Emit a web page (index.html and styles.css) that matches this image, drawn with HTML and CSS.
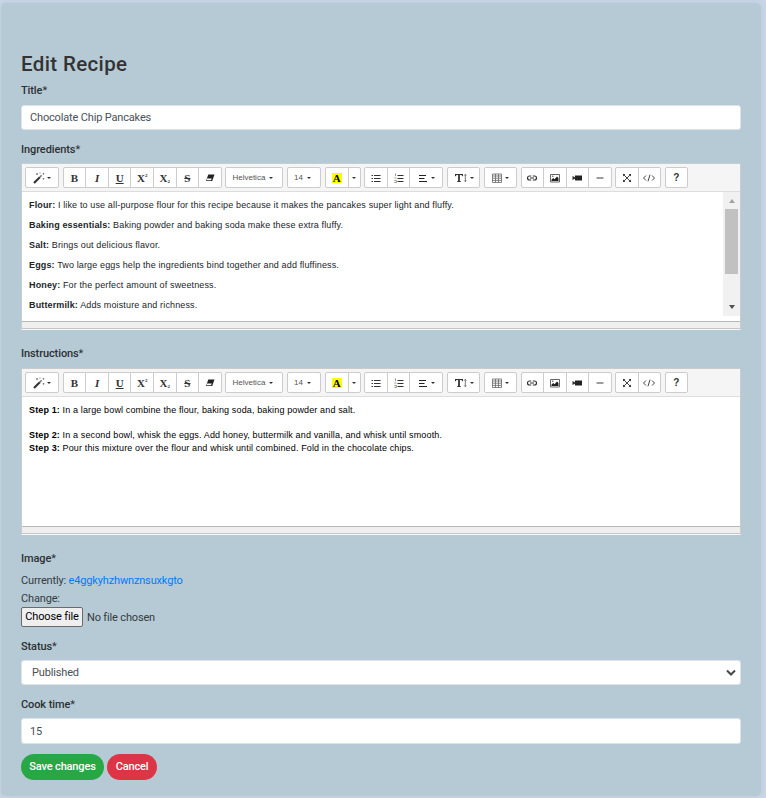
FILE: index.html
```html
<!DOCTYPE html>
<html lang="en">
<head>
<meta charset="utf-8">
<title>Edit Recipe</title>
<link rel="stylesheet" href="styles.css">
</head>
<body>
<svg class="sprite" aria-hidden="true">
  <symbol id="magic" viewBox="0 0 12 12"><path d="M1 11 6.8 5.2" stroke="#333" stroke-width="2.1"/><path d="M6.8 5.2 8.7 3.3" stroke="#777" stroke-width="1.6"/><path d="M4 1v2M3 2h2M7 .5v1.2M10.5 1v1.6M9.7 1.8h1.6M10.5 6v1.6M9.7 6.8h1.6" stroke="#666" stroke-width=".8"/></symbol>
  <symbol id="eraser" viewBox="0 0 12 12"><path d="M4.3 2.5H10.5L8.2 9H2z" fill="#222"/><path d="M3.2 6.4H7.7L7 8.2H2.6z" fill="#fff"/></symbol>
  <symbol id="ul" viewBox="0 0 12 12"><path d="M1.5 3.5h1.5M1.5 6.5h1.5M1.5 9.5h1.5M4 3.5h6.5M4 6.5h6.5M4 9.5h6.5" stroke="#333" stroke-width="1.1"/></symbol>
  <symbol id="ol" viewBox="0 0 12 12"><path d="M2.5 1.5v2.6M1.4 6h2M1.4 8.5h2v2h-2" fill="none" stroke="#8a7965" stroke-width=".8"/><path d="M4.5 3.5h6M4.5 6.5h6M4.5 9.5h6" stroke="#333" stroke-width="1.1"/></symbol>
  <symbol id="align" viewBox="0 0 12 12"><path d="M2 3.5h7M2 6.5h5.5M2 9.5h8" stroke="#222" stroke-width="1.2"/></symbol>
  <symbol id="height" viewBox="0 0 14 12"><path d="M1 4.2V2h8v2.2H8.3L7.5 3H5.9v6.1l1.1.5v.4H3v-.4l1.1-.5V3H2.5l-.8 1.2z" fill="#333"/><path d="M11.3 2.5v7M10.3 3.5l1-1.2 1 1.2M10.3 8.5l1 1.2 1-1.2" fill="none" stroke="#555" stroke-width=".8"/></symbol>
  <symbol id="table" viewBox="0 0 12 12"><path d="M1.5 2h9v8.5h-9zM1.5 4h9M1.5 6.2h9M1.5 8.4h9M4.5 2v8.5M7.5 2v8.5" fill="none" stroke="#666" stroke-width=".8"/></symbol>
  <symbol id="link" viewBox="0 0 12 12"><path d="M5.2 4H3.5a2 2 0 0 0 0 4h1.7M6.8 4h1.7a2 2 0 0 1 0 4H6.8M4 6h4" fill="none" stroke="#333" stroke-width="1.2"/></symbol>
  <symbol id="picture" viewBox="0 0 12 12"><path d="M1.5 2.5h9v7.5h-9z" fill="none" stroke="#555" stroke-width=".9"/><path d="M2.5 9V7.5L4.3 6l1.2 1.2L8 4.5 9.5 6v3z" fill="#222"/><circle cx="3.8" cy="4.3" r=".7" fill="#444"/></symbol>
  <symbol id="video" viewBox="0 0 12 12"><path d="M4 3.5h7v5H4z" fill="#222"/><path d="M1.5 4v4l3-1.6v-.8z" fill="#333"/></symbol>
  <symbol id="minus" viewBox="0 0 12 12"><path d="M2.5 6h7" stroke="#666" stroke-width="1.3"/></symbol>
  <symbol id="expand" viewBox="0 0 12 12"><path d="m3 3 6 6M9 3 3 9" stroke="#444"/><path d="M2 4.4V2h2.4zM7.6 2H10v2.4zM2 7.6V10h2.4zM10 7.6V10H7.6z" fill="#333"/></symbol>
  <symbol id="code" viewBox="0 0 14 12"><path d="M4 3.5 1.5 6 4 8.5M10 3.5l2.5 2.5L10 8.5M8 2.7 6 9.3" fill="none" stroke="#444" stroke-width="1"/></symbol>
</svg>

<form class="card">
  <h1>Edit Recipe</h1>
  <label class="label">Title<span>*</span></label>
  <div class="control title">Chocolate Chip Pancakes</div>

  <label class="label label-ing">Ingredients<span>*</span></label>
  <section class="editor">
    <div class="toolbar"></div>
    <div class="editable">
      <div class="body list">
        <p><b>Flour:</b> I like to use all-purpose flour for this recipe because it makes the pancakes super light and fluffy.</p>
        <p><b>Baking essentials:</b> Baking powder and baking soda make these extra fluffy.</p>
        <p><b>Salt:</b> Brings out delicious flavor.</p>
        <p><b>Eggs:</b> Two large eggs help the ingredients bind together and add fluffiness.</p>
        <p><b>Honey:</b> For the perfect amount of sweetness.</p>
        <p><b>Buttermilk:</b> Adds moisture and richness.</p>
      </div>
      <div class="scrollbar"><i class="up"></i><i class="thumb"></i><i class="down"></i></div>
    </div>
    <div class="statusbar"></div>
  </section>

  <label class="label label-ins">Instructions<span>*</span></label>
  <section class="editor">
    <div class="toolbar"></div>
    <div class="editable">
      <div class="body steps">
        <p class="first"><b>Step 1:</b> In a large bowl combine the flour, baking soda, baking powder and salt.</p>
        <p><b>Step 2:</b> In a second bowl, whisk the eggs. Add honey, buttermilk and vanilla, and whisk until smooth.</p>
        <p><b>Step 3:</b> Pour this mixture over the flour and whisk until combined. Fold in the chocolate chips.</p>
      </div>
    </div>
    <div class="statusbar"></div>
  </section>

  <label class="label label-img">Image<span>*</span></label>
  <div class="file-text current">Currently: <a>e4ggkyhzhwnznsuxkgto</a></div>
  <div class="file-text change">Change:</div>
  <div class="file"><span class="choose">Choose file</span><span>No file chosen</span></div>

  <label class="label label-status">Status<span>*</span></label>
  <div class="control select"><span>Published</span><svg width="10" height="8" viewBox="0 0 10 8"><path d="m1 1.5 4 4 4-4" fill="none" stroke="#43484d" stroke-width="2"/></svg></div>

  <label class="label label-cook">Cook time<span>*</span></label>
  <div class="control cook">15</div>
  <div class="actions"><span class="btn save">Save changes</span><span class="btn cancel">Cancel</span></div>
</form>
<script src="toolbar.js"></script>
</body>
</html>
```
FILE: styles.css
```css
* { box-sizing: border-box; }
html, body { margin: 0; height: 798px; overflow: hidden; }
body { background: #cbd7e6; font-family: Roboto, sans-serif; font-size: 11px; letter-spacing: -.16px; color: #343a40; padding: 3px 5px 2px 1px; }
.sprite { display: none; }
.card { height: 793px; width: 760px; border-radius: 5px; background: #b6cad5; padding: 48px 20px 0; box-shadow: 0 0 7px rgba(150, 170, 205, .35); }
h1 { margin: 0; font-size: 20.5px; line-height: 26px; font-weight: 500; color: #333; height: 32px; letter-spacing: .36px; }
.label { display: block; height: 22px; line-height: 16px; font-weight: 500; color: #2d3134; letter-spacing: -.1px; }
.label span { font-weight: 400; }
.control { height: 25px; border: 1px solid #dde3e8; border-radius: 3px; background: #fff; color: #495057; padding: 0 8px; line-height: 23px; font-size: 11px; }
.label-ing { margin-top: 12px; height: 21px; }

.editor { height: 167px; border: 1px solid #c9cccf; border-bottom: 1px solid #f6f8f9; background: #fff; display: flex; flex-direction: column; }
.toolbar { height: 28px; flex: none; background: #f5f5f5; border-bottom: 1px solid #ddd; display: flex; gap: 3.7px; padding: 3px 3px 0; letter-spacing: 0; }
.group { display: flex; flex: none; height: 21px; border: 1px solid #ccc; border-radius: 2px; background: #fff; }
.tool { display: flex; align-items: center; justify-content: center; gap: 2px; flex: 1 1 0; color: #333; font: 700 11px "Liberation Serif", serif; white-space: nowrap; }
.tool + .tool { border-left: 1px solid #ccc; }
.tool svg { display: block; width: 12px; height: 12px; flex: none; }
.tool .wide { width: 14px; }
.tool sup, .tool sub { font-size: 5px; line-height: 1; }
.tool sup { align-self: flex-start; margin: 5px 0 0 -2px; }
.tool sub { align-self: flex-end; margin: 0 0 3px -2px; }
.tool.sans { font: 400 8px "Liberation Sans", sans-serif; color: #555; gap: 4px; padding-right: 3px; }
.tool.question { font: 700 10px "Liberation Sans", sans-serif; }
.caret { border: 2px solid transparent; border-top-color: #333; border-bottom: 0; }
.arrow { flex: 0 0 12px; }
.bulky { flex: 0 0 33px; }
.mark { background: #ff0; color: #000; padding: 0 1px; line-height: 10px; }
.italic { font-style: italic; }
.underline { text-decoration: underline; }
.strike { text-decoration: line-through; }

.editable { height: 129px; flex: none; display: flex; justify-content: space-between; }
.body { font-family: "Liberation Sans", Arial, sans-serif; font-size: 9px; letter-spacing: .135px; white-space: nowrap; padding: 3px 0 0 7px; }
.body p { margin: 0; }
.list { color: #212529; }
.list p { height: 20px; line-height: 20px; }
.steps { color: #000; padding-top: 7px; }
.steps p { height: 13px; line-height: 13px; }
.steps .first { height: 25px; }
.scrollbar { width: 17px; height: 124px; background: #f1f1f1; display: flex; flex-direction: column; align-items: center; padding: 7px 0 7px; }
.up { border: 3.5px solid transparent; border-top: 0; border-bottom: 4px solid #a3a3a3; }
.down { border: 3.5px solid transparent; border-bottom: 0; border-top: 4px solid #505050; margin-top: auto; }
.thumb { width: 13px; height: 65px; margin-top: 6px; background: #c1c1c1; }
.statusbar { height: 8px; background: #efefef; border-top: 1px solid #b8b8b8; border-bottom: 1px solid #c5c5c5; }

.label-ins { margin-top: 16px; }
.label-img { margin-top: 16px; }
.file-text { height: 18px; line-height: 16px; }
.file-text a { color: #007bff; }
.file { display: flex; align-items: center; gap: 4px; height: 20px; margin-top: -2px; }
.choose { border: 1px solid #6b6b6b; border-radius: 2px; background: #efefef; color: #000; width: 62px; height: 20px; line-height: 17px; text-align: center; }
.label-status { margin-top: 12px; height: 21px; }
.select { display: flex; justify-content: space-between; align-items: center; padding: 0 4px 0 10px; }
.label-cook { margin-top: 12px; height: 21px; }
.cook { height: 26px; line-height: 25px; }
.actions { display: flex; gap: 3px; margin-top: 10px; }
.btn { height: 26px; line-height: 25px; border-radius: 13px; color: #fff; font-weight: 500; text-align: center; }
.save { width: 83px; background: #28a745; }
.cancel { width: 50px; background: #dc3545; }
```
FILE: toolbar.js
```js
const caret = '<i class="caret"></i>';
const icon = (id, cls = '') => `<svg class="${cls}"><use href="#${id}"/></svg>`;
const tool = (content, cls = '') => `<span class="tool ${cls}">${content}</span>`;

const groups = [
  [34, [tool(icon('magic') + caret)]],
  [159, [tool('B'), tool('I', 'italic'), tool('U', 'underline'), tool('X<sup>2</sup>'), tool('X<sub>2</sub>'), tool('S', 'strike'), tool(icon('eraser'))]],
  [58, [tool('Helvetica' + caret, 'sans')]],
  [34, [tool('14' + caret, 'sans')]],
  [36, [tool('<span class="mark">A</span>'), tool(caret, 'arrow')]],
  [79, [tool(icon('ul')), tool(icon('ol')), tool(icon('align') + caret, 'bulky')]],
  [33, [tool(icon('height', 'wide') + caret)]],
  [33, [tool(icon('table') + caret)]],
  [91, [tool(icon('link')), tool(icon('picture')), tool(icon('video')), tool(icon('minus'))]],
  [46, [tool(icon('expand')), tool(icon('code', 'wide'))]],
  [23, [tool('?', 'question')]],
];

const markup = groups
  .map(([width, tools]) => `<div class="group" style="width:${width}px">${tools.join('')}</div>`)
  .join('');
document.querySelectorAll('.toolbar').forEach((bar) => { bar.innerHTML = markup; });
```
